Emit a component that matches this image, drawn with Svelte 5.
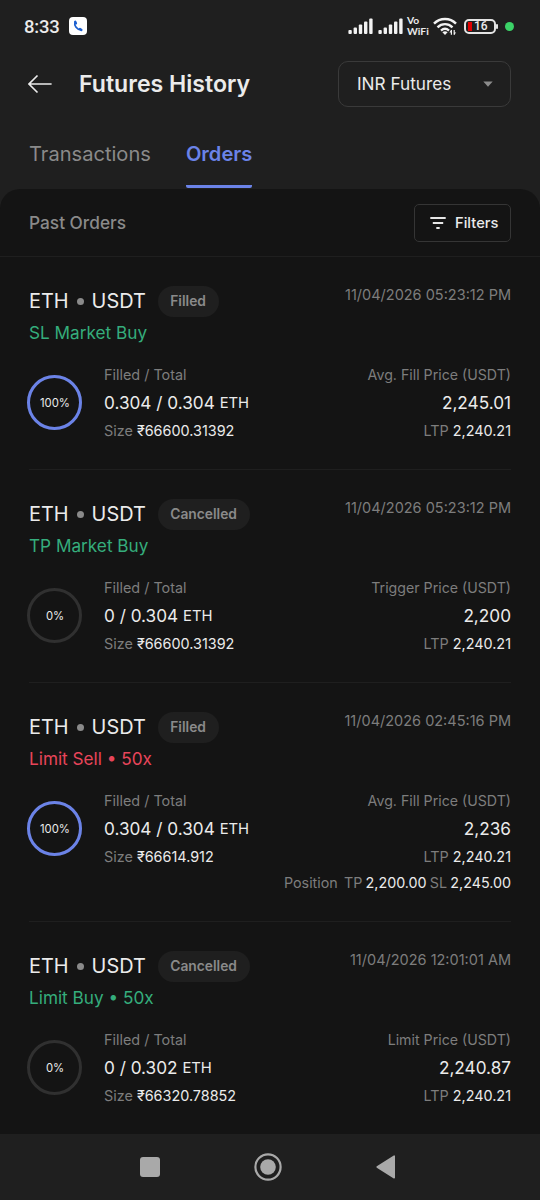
<script>
  const tabs = ['Transactions', 'Orders'];
  let activeTab = $state('Orders');
  let market = $state('INR Futures');

  const orders = [
    {
      status: 'Filled', type: 'SL Market Buy', side: 'buy', time: '11/04/2026 05:23:12 PM',
      percent: 100, amount: '0.304 / 0.304', size: '₹66600.31392',
      priceLabel: 'Avg. Fill Price (USDT)', price: '2,245.01', ltp: '2,240.21'
    },
    {
      status: 'Cancelled', type: 'TP Market Buy', side: 'buy', time: '11/04/2026 05:23:12 PM',
      percent: 0, amount: '0 / 0.304', size: '₹66600.31392',
      priceLabel: 'Trigger Price (USDT)', price: '2,200', ltp: '2,240.21'
    },
    {
      status: 'Filled', type: 'Limit Sell • 50x', side: 'sell', time: '11/04/2026 02:45:16 PM',
      percent: 100, amount: '0.304 / 0.304', size: '₹66614.912',
      priceLabel: 'Avg. Fill Price (USDT)', price: '2,236', ltp: '2,240.21',
      tp: '2,200.00', sl: '2,245.00'
    },
    {
      status: 'Cancelled', type: 'Limit Buy • 50x', side: 'buy', time: '11/04/2026 12:01:01 AM',
      percent: 0, amount: '0 / 0.302', size: '₹66320.78852',
      priceLabel: 'Limit Price (USDT)', price: '2,240.87', ltp: '2,240.21'
    }
  ];

  const circumference = 2 * Math.PI * 26;
</script>

{#snippet signal()}
  <svg width="25" height="16" viewBox="0 0 25 16" fill="#f2f2f2">
    <rect x="0.4" y="12" width="3.4" height="4" rx="1" />
    <rect x="5.6" y="9.5" width="3.4" height="6.5" rx="1" />
    <rect x="10.8" y="6.5" width="3.4" height="9.5" rx="1" />
    <rect x="16" y="3.5" width="3.4" height="12.5" rx="1" />
    <rect x="21.2" y="0.5" width="3.4" height="15.5" rx="1" />
  </svg>
{/snippet}

<div class="screen">
  <div class="status">
    <span class="clock">8:33</span>
    <svg class="call" width="18" height="18" viewBox="0 0 18 18">
      <rect width="18" height="18" rx="4" fill="#fff" />
      <path d="M6 5.2C4.9 8.5 8 12.8 12 12.8" fill="none" stroke="#1b5fd0" stroke-width="1.8" />
      <path d="M6.2 4.8L6.9 6.3M11 12L12.4 12.9" stroke="#1b5fd0" stroke-width="2.4" stroke-linecap="round" />
    </svg>
    <div class="indicators">
      {@render signal()}
      {@render signal()}
      <div class="vowifi"><span>Vo</span><span>WiFi</span></div>
      <svg class="wifi" width="24" height="19" viewBox="0 0 24 19" fill="none" stroke="#f2f2f2" stroke-width="2.4">
        <path d="M1 6.7C7 0.4 17 0.4 23 6.7" />
        <path d="M4.5 10.3C8.8 6.1 15.2 6.1 19.5 10.3" />
        <path d="M8 13.6C10.4 11.4 13.6 11.4 16 13.6" />
        <path d="M9.4 15.2Q12 13.4 14.6 15.2L12 18Z" fill="#f2f2f2" stroke="none" />
        <path d="M18.4 13V17.8M21.2 13V17.8" stroke-width="1.2" />
        <path d="M16.4 15.4L18.6 12.6V15.4ZM23.2 15.4L21 18V15.4Z" fill="#f2f2f2" stroke="none" />
      </svg>
      <div class="battery"><i></i><b>16</b></div>
      <span class="dot"></span>
    </div>
  </div>

  <header>
    <svg width="24" height="20" viewBox="0 0 24 20" fill="none" stroke="#ececec" stroke-width="1.6">
      <path d="M9.5 1.5L1 10L9.5 18.5M1 10H23.6" />
    </svg>
    <h1>Futures History</h1>
    <button class="market">
      <span>{market}</span>
      <svg width="10" height="6" viewBox="0 0 10 6"><path d="M0.3 0.5H9.7L5 5.7Z" fill="#8c8c8c" /></svg>
    </button>
  </header>

  <nav>
    {#each tabs as tab}
      <button class="tab" class:active={tab === activeTab} onclick={() => (activeTab = tab)}>{tab}</button>
    {/each}
  </nav>

  <main>
    <div class="bar">
      <h2>Past Orders</h2>
      <button class="filters">
        <svg width="16" height="12" viewBox="0 0 16 12" fill="#e6e6e6">
          <rect x="0.3" y="0" width="15.4" height="2" />
          <rect x="2.8" y="5" width="10.4" height="2" />
          <rect x="6.3" y="10" width="3.4" height="2" />
        </svg>
        <span>Filters</span>
      </button>
    </div>

    {#each orders as order}
      <article>
        <div class="top">
          <div class="pair">ETH <i></i> USDT</div>
          <span class="pill">{order.status}</span>
          <time>{order.time}</time>
        </div>
        <div class="type {order.side}">{order.type}</div>
        <div class="details">
          <div class="ring">
            <svg width="56" height="56" viewBox="0 0 56 56" fill="none" stroke-width="3">
              <circle cx="27.5" cy="27.5" r="26" stroke="#303030" />
              {#if order.percent > 0}
                <circle cx="27.5" cy="27.5" r="26" stroke="#6b83e8" stroke-dasharray="{(circumference * order.percent) / 100} {circumference}" />
              {/if}
            </svg>
            <span>{order.percent}%</span>
          </div>
          <div class="col">
            <div class="label">Filled / Total</div>
            <div class="value">{order.amount} <small>ETH</small></div>
            <div class="sub">Size <b>{order.size}</b></div>
          </div>
          <div class="col right">
            <div class="label">{order.priceLabel}</div>
            <div class="value price">{order.price}</div>
            <div class="sub">LTP <b>{order.ltp}</b></div>
            {#if order.tp}
              <div class="sub position"><span>Position</span> TP <b>{order.tp}</b> SL <b>{order.sl}</b></div>
            {/if}
          </div>
        </div>
      </article>
    {/each}
  </main>

  <footer>
    <svg width="20" height="20" viewBox="0 0 20 20"><rect width="20" height="20" rx="3" fill="#a9a9a9" /></svg>
    <svg width="28" height="28" viewBox="0 0 28 28">
      <circle cx="14" cy="14" r="12.6" fill="none" stroke="#a9a9a9" stroke-width="2.2" />
      <circle cx="14" cy="14" r="7.8" fill="#a9a9a9" />
    </svg>
    <svg width="20" height="24" viewBox="0 0 20 24"><path d="M1.2 12L18.2 1.2V22.8Z" fill="#a9a9a9" stroke="#a9a9a9" stroke-width="1.6" stroke-linejoin="round" /></svg>
  </footer>
</div>

<style>
  :global(body) {
    background: #1f1f1f;
  }

  .screen {
    width: 540px;
    height: 1200px;
    overflow: hidden;
    display: flex;
    flex-direction: column;
    background: #1f1f1f;
    color: #ebebeb;
    font-family: Inter, sans-serif;
  }

  svg {
    display: block;
    flex: none;
  }

  button {
    font: inherit;
    color: inherit;
    background: none;
    padding: 0;
    cursor: pointer;
  }

  .status {
    display: flex;
    align-items: center;
    height: 52px;
    padding: 0 26px 0 24px;
    flex: none;
    box-sizing: border-box;
  }

  .clock {
    width: 45px;
    font: 500 18.5px/52px Roboto, sans-serif;
    letter-spacing: -0.2px;
    padding-top: 2px;
    white-space: nowrap;
  }

  .indicators {
    display: flex;
    align-items: center;
    margin-left: auto;
  }

  .indicators > svg:nth-child(2) {
    margin-left: 5px;
  }

  .vowifi {
    display: flex;
    flex-direction: column;
    width: 22px;
    margin-left: 4px;
    font: 700 10.3px/11px Lato, sans-serif;
  }

  .wifi {
    margin-left: 4px;
  }

  .battery {
    position: relative;
    display: flex;
    align-items: center;
    width: 28px;
    height: 11px;
    margin-left: 7px;
    border: 2px solid #e4e4e4;
    border-radius: 5px;
  }

  .battery::after {
    content: '';
    position: absolute;
    left: 30px;
    top: 3px;
    width: 2px;
    height: 5px;
    border-radius: 1px;
    background: #e4e4e4;
  }

  .battery i {
    width: 4px;
    height: 9px;
    margin-left: 2px;
    background: #e00000;
  }

  .battery b {
    margin-left: 2px;
    font: 500 12px/11px Roboto, sans-serif;
  }

  .dot {
    width: 9px;
    height: 9px;
    margin-left: 9px;
    border-radius: 50%;
    background: #3bd267;
  }

  header {
    display: flex;
    align-items: center;
    height: 64px;
    padding: 0 29px 0 28px;
    flex: none;
  }

  h1 {
    margin: 0 0 0 27px;
    font-size: 23.1px;
    font-weight: 600;
    line-height: 32px;
  }

  .market {
    display: flex;
    align-items: center;
    justify-content: space-between;
    width: 173px;
    height: 46px;
    margin: -1px 0 0 auto;
    padding: 0 17px 0 18px;
    border: 1.5px solid #3a3a3a;
    border-radius: 10px;
    font-size: 17.2px;
    box-sizing: border-box;
  }

  nav {
    display: flex;
    gap: 35px;
    height: 73px;
    padding-left: 29px;
    flex: none;
  }

  .tab {
    height: 72px;
    padding-top: 6px;
    border: 0;
    border-bottom: 3px solid transparent;
    border-radius: 2px;
    font-size: 20.1px;
    color: #8a8a8a;
  }

  .tab.active {
    color: #6b83e8;
    font-weight: 600;
    border-bottom-color: #6b83e8;
  }

  main {
    flex: 1;
    min-height: 0;
    overflow: hidden;
    background: #141414;
    border-radius: 20px 20px 0 0;
  }

  .bar {
    display: flex;
    align-items: center;
    justify-content: space-between;
    height: 68px;
    padding: 0 29px;
    border-bottom: 1px solid #1f1f1f;
    box-sizing: border-box;
  }

  h2 {
    margin: 0;
    font-size: 17.3px;
    font-weight: 500;
    color: #8a8a8a;
  }

  .filters {
    display: flex;
    align-items: center;
    gap: 9px;
    height: 38px;
    width: 97px;
    padding-left: 15px;
    border: 1px solid #353535;
    border-radius: 5px;
    font-size: 14.7px;
    font-weight: 500;
    box-sizing: border-box;
  }

  article {
    margin: 0 29px;
    padding: 28px 0 25px;
    border-bottom: 1px solid #1f1f1f;
  }

  .top {
    display: flex;
    align-items: center;
    height: 32px;
  }

  .pair {
    display: flex;
    align-items: center;
    gap: 8px;
    font-size: 19.9px;
  }

  .pair i {
    width: 7px;
    height: 7px;
    border-radius: 50%;
    background: #8a8a8a;
  }

  .pill {
    margin-left: 12px;
    padding: 0 13px 0 12.5px;
    border-radius: 16px;
    background: #1f1f1f;
    color: #8a8a8a;
    font-size: 13.8px;
    font-weight: 600;
    line-height: 31px;
  }

  time {
    align-self: flex-start;
    margin-left: auto;
    font-size: 14.5px;
    line-height: 20px;
    color: #7d7d7d;
  }

  .type {
    font-size: 17.2px;
    line-height: 32px;
  }

  .buy {
    color: #35ad7c;
  }

  .sell {
    color: #e8455a;
  }

  .details {
    display: flex;
    align-items: flex-start;
    margin-top: 13px;
  }

  .ring {
    position: relative;
    margin: 13px 0 0 -2px;
  }

  .ring span {
    position: absolute;
    inset: 0;
    font-size: 11.3px;
    line-height: 56px;
    text-align: center;
  }

  .col {
    margin-left: 21px;
    white-space: nowrap;
  }

  .right {
    margin-left: auto;
    text-align: right;
  }

  .label {
    font-size: 14.4px;
    line-height: 26px;
    color: #7d7d7d;
  }

  .right .label {
    font-size: 14.2px;
  }

  .value {
    font-size: 17.2px;
    line-height: 30px;
  }

  small {
    font-size: 14.8px;
    line-height: 1;
    vertical-align: 1px;
  }

  .sub {
    font-size: 14.4px;
    line-height: 26px;
    color: #7d7d7d;
  }

  .sub b {
    font-weight: 400;
    color: #ebebeb;
  }

  .position {
    margin-left: -60px;
    font-size: 14.3px;
    word-spacing: -0.8px;
  }

  .position span {
    margin-right: 3px;
  }

  footer {
    display: flex;
    align-items: center;
    height: 66px;
    padding: 0 144px 0 140px;
    justify-content: space-between;
    flex: none;
    box-sizing: border-box;
  }
</style>
